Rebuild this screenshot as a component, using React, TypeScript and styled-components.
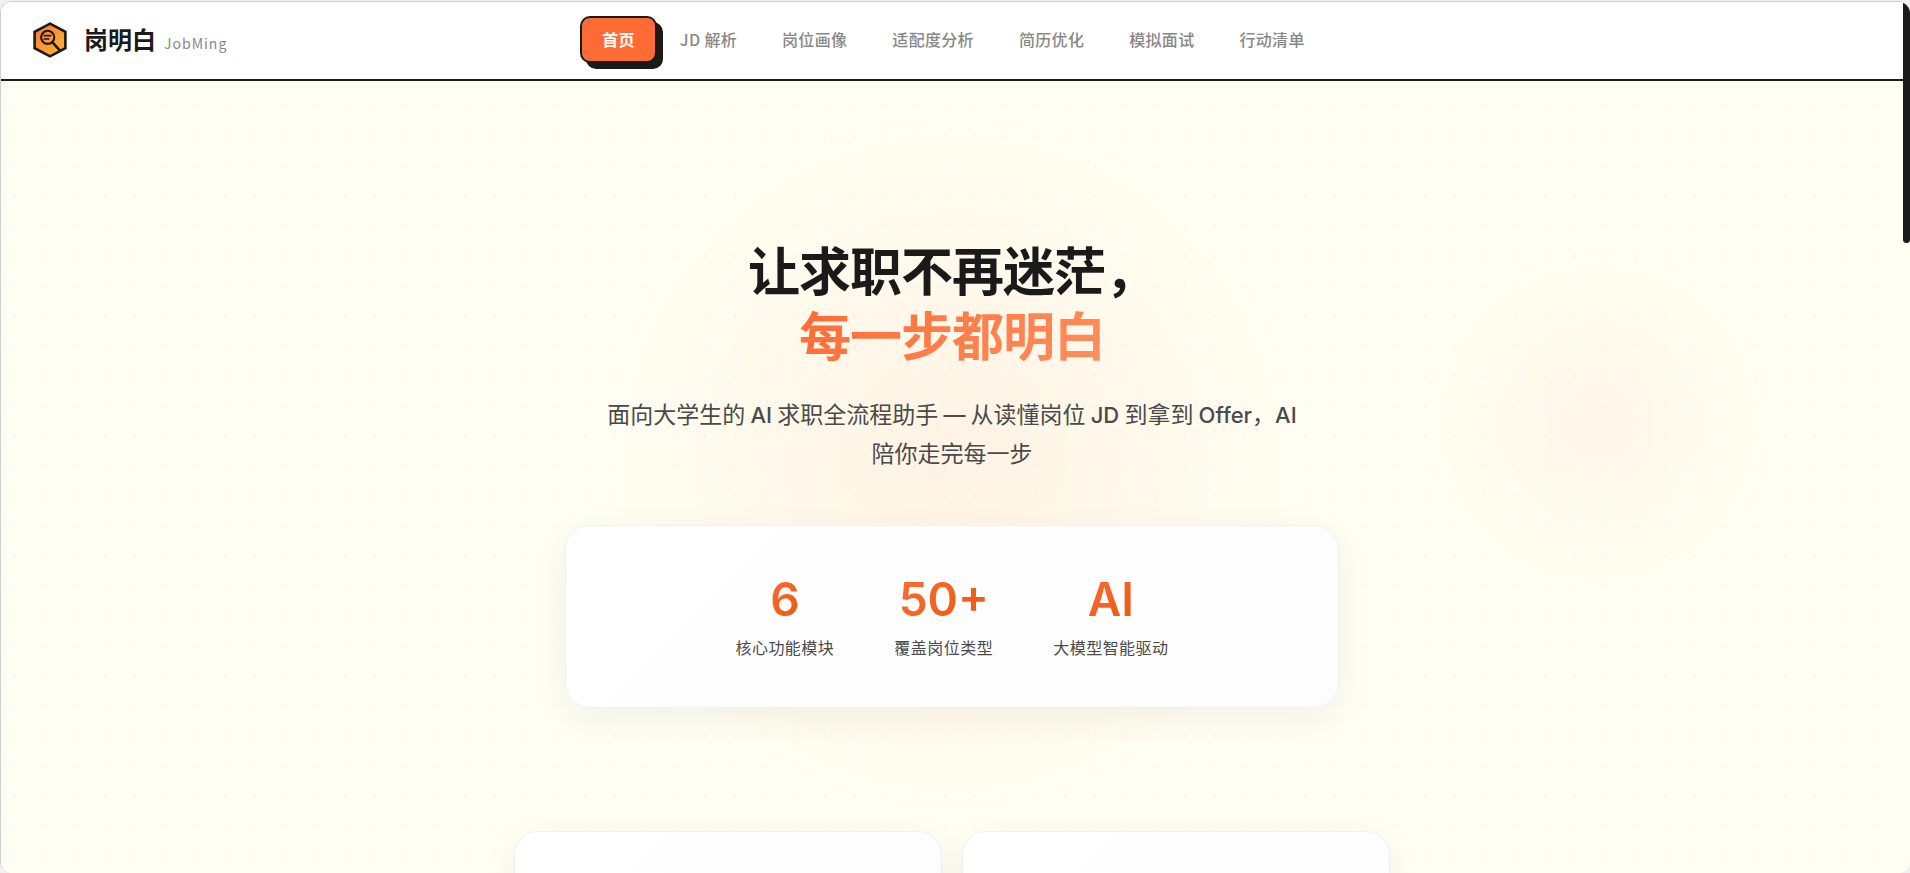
import React from "react";
import styled, { createGlobalStyle } from "styled-components";

const ink = "#1a1a1a";
const orange = "#ff6b35";
const cjk = `"Noto Sans CJK SC", sans-serif`;

const GlobalStyle = createGlobalStyle`
  * { box-sizing: border-box; }
  body {
    margin: 0;
    background: #f1f1f1;
    color: ${ink};
    font-family: ${cjk};
  }
`;

const Frame = styled.div`
  display: flex;
  height: 100vh;
  padding-top: 1px;
`;

const Viewport = styled.div`
  flex: 1;
  display: flex;
  min-width: 0;
  overflow: hidden;
  border: 1px solid #cfcfd3;
  border-right: 0;
  border-bottom: 0;
  border-radius: 12px;
  background: #fffef2;
`;

const Page = styled.div`
  flex: 1;
  min-width: 0;
  overflow: hidden;
  background:
    radial-gradient(circle 356px at 50% 460px, rgba(255, 107, 53, 0.07), rgba(255, 107, 53, 0.035) 55%, transparent),
    radial-gradient(circle 180px at 84% 421px, rgba(255, 107, 53, 0.05), rgba(255, 107, 53, 0.025) 55%, transparent),
    radial-gradient(circle, rgba(26, 26, 26, 0.04) 1px, transparent 1px) -1px -1px / 30px 30px,
    #fffef2;
`;

const ScrollTrack = styled.div`
  width: 7px;
`;

const ScrollThumb = styled.div`
  height: 241px;
  border-radius: 0 0 4px 4px;
  background: ${ink};
`;

const Header = styled.header`
  display: grid;
  grid-template-columns: 1fr auto 1fr;
  align-items: center;
  height: 79px;
  padding: 0 28px 2px 31px;
  border-bottom: 2px solid ${ink};
  background: #fff;
`;

const Brand = styled.a`
  display: flex;
  align-items: center;
  gap: 16px;
  color: ${ink};
  text-decoration: none;
`;

const BrandText = styled.span`
  display: flex;
  align-items: baseline;
  gap: 8px;
  padding-top: 2px;
`;

const BrandName = styled.strong`
  font-family: Roboto, ${cjk};
  font-size: 24px;
  line-height: 36px;
`;

const BrandLatin = styled.span`
  color: #888;
  font-size: 14px;
  letter-spacing: 1px;
  line-height: 20px;
`;

const Nav = styled.nav`
  display: flex;
  gap: 1px;
`;

const NavLink = styled.a<{ $active?: boolean }>`
  padding: 10px 20px;
  border: 2px solid ${(p) => (p.$active ? ink : "transparent")};
  border-radius: 10px;
  background: ${(p) => (p.$active ? orange : "transparent")};
  box-shadow: ${(p) => (p.$active ? `6px 6px 0 ${ink}` : "none")};
  color: ${(p) => (p.$active ? "#fff" : "#888")};
  font-size: 16px;
  font-weight: ${(p) => (p.$active ? 700 : 500)};
  letter-spacing: 0.02em;
  line-height: 23px;
  text-decoration: none;
  white-space: nowrap;
`;

const Hero = styled.section`
  display: flex;
  flex-direction: column;
  align-items: center;
  padding: 160px 24px 0;
  text-align: center;
`;

const Title = styled.h1`
  margin: 0 0 23px;
  font-family: Roboto, ${cjk};
  font-size: 52px;
  font-weight: 700;
  letter-spacing: -1px;
  line-height: 65px;
`;

const Accent = styled.span`
  display: table;
  margin: 0 auto;
  background: linear-gradient(135deg, ${orange}, #ff8f5e);
  background-clip: text;
  -webkit-background-clip: text;
  color: transparent;
`;

const Lead = styled.p`
  max-width: 700px;
  margin: 0 0 53px;
  color: #4a4a4a;
  font-size: 23px;
  line-height: 39px;
`;

const Latin = styled.span`
  font-family: Inter, sans-serif;
  font-size: 22px;
  font-weight: 500;
  line-height: 1;
`;

const Panel = styled.div`
  border: 1px solid #f0f0f0;
  border-radius: 24px;
  background: linear-gradient(135deg, #fff, #fcfcfc);
  box-shadow: 0 10px 36px rgba(26, 26, 26, 0.06);
`;

const Stats = styled(Panel)`
  display: flex;
  justify-content: center;
  gap: 60px;
  width: 100%;
  max-width: 774px;
  padding: 48px;
`;

const Stat = styled.div`
  display: flex;
  flex-direction: column;
  align-items: center;
  gap: 11px;
`;

const StatValue = styled.strong`
  background: linear-gradient(135deg, ${orange}, #ea580c);
  background-clip: text;
  -webkit-background-clip: text;
  color: transparent;
  font-family: Inter, sans-serif;
  font-size: 46px;
  font-weight: 600;
  line-height: 50px;
`;

const StatLabel = styled.span`
  color: #4a4a4a;
  font-size: 16px;
  letter-spacing: 0.03em;
  line-height: 24px;
`;

const Features = styled.section`
  display: grid;
  grid-template-columns: 1fr 1fr;
  gap: 20px;
  max-width: 876px;
  margin: 123px auto 0;
`;

const Feature = styled(Panel)`
  min-height: 240px;
`;

const links = ["首页", "JD 解析", "岗位画像", "适配度分析", "简历优化", "模拟面试", "行动清单"];

const stats = [
  { value: "6", label: "核心功能模块" },
  { value: "50+", label: "覆盖岗位类型" },
  { value: "AI", label: "大模型智能驱动" },
];

function Logo() {
  return (
    <svg width="36" height="36" viewBox="0 0 36 36" fill="none" stroke={ink} strokeLinecap="round" aria-hidden="true">
      <defs>
        <linearGradient id="logo-fill" x1="4" y1="4" x2="32" y2="32" gradientUnits="userSpaceOnUse">
          <stop stopColor="#ff7a35" />
          <stop offset="1" stopColor="#ffb532" />
        </linearGradient>
      </defs>
      <path d="M18 1.6 33.4 9.8V26.2L18 34.4 2.6 26.2V9.8Z" fill="url(#logo-fill)" strokeWidth="2.6" />
      <circle cx="15.7" cy="15.3" r="6.6" strokeWidth="2.1" />
      <path d="M20.5 20.3 28 28.6" strokeWidth="2.6" />
      <path d="M12.2 13.6h6.6M12.2 17h4.6" strokeWidth="1.6" />
    </svg>
  );
}

export default function App() {
  return (
    <Frame>
      <GlobalStyle />
      <Viewport>
        <Page>
          <Header>
            <Brand href="#home">
              <Logo />
              <BrandText>
                <BrandName>岗明白</BrandName>
                <BrandLatin>JobMing</BrandLatin>
              </BrandText>
            </Brand>
            <Nav>
              {links.map((label, i) => (
                <NavLink key={label} href={`#section-${i}`} $active={i === 0} aria-current={i === 0 ? "page" : undefined}>
                  {label}
                </NavLink>
              ))}
            </Nav>
          </Header>
          <main>
            <Hero>
              <Title>
                让求职不再迷茫，
                <Accent>每一步都明白</Accent>
              </Title>
              <Lead>
                面向大学生的 <Latin>AI</Latin> 求职全流程助手 <Latin>—</Latin> 从读懂岗位 <Latin>JD</Latin> 到拿到{" "}
                <Latin>Offer</Latin>，<Latin>AI</Latin> 陪你走完每一步
              </Lead>
              <Stats>
                {stats.map((s) => (
                  <Stat key={s.label}>
                    <StatValue>{s.value}</StatValue>
                    <StatLabel>{s.label}</StatLabel>
                  </Stat>
                ))}
              </Stats>
            </Hero>
            <Features>
              <Feature />
              <Feature />
            </Features>
          </main>
        </Page>
        <ScrollTrack aria-hidden="true">
          <ScrollThumb />
        </ScrollTrack>
      </Viewport>
    </Frame>
  );
}
